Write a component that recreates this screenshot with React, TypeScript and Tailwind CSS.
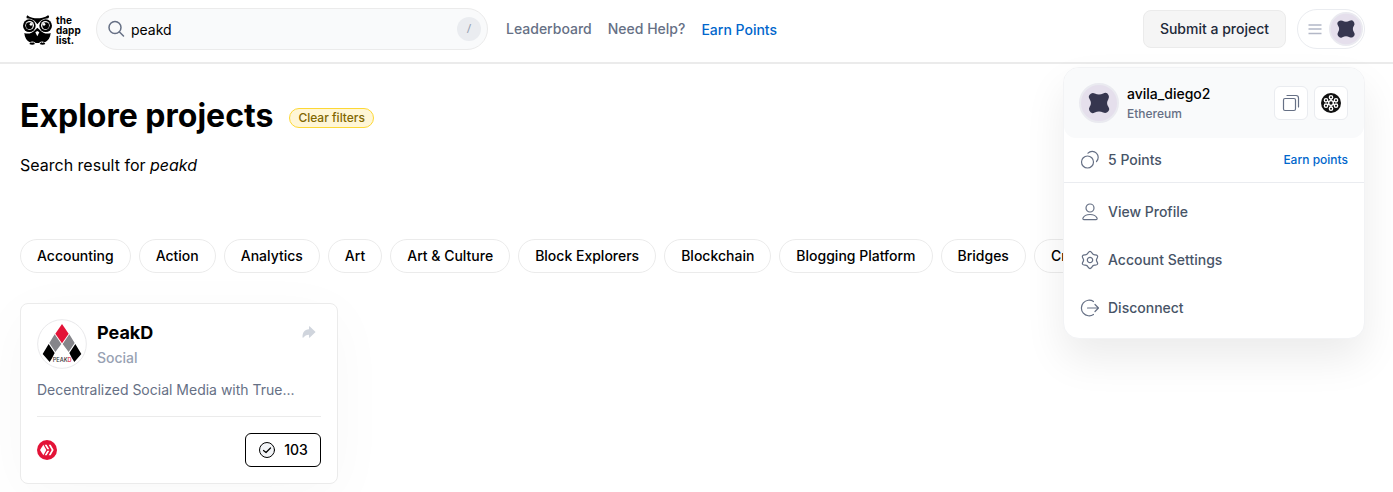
import React from "react";
import { IoArrowRedo } from "react-icons/io5";

const categories = [
  "Accounting",
  "Action",
  "Analytics",
  "Art",
  "Art & Culture",
  "Block Explorers",
  "Blockchain",
  "Blogging Platform",
  "Bridges",
  "Crowdfunding",
];

const OwlLogo = () => (
  <svg viewBox="0 0 87 90" className="h-[30px] w-[29px]" aria-hidden="true">
    <path d="M13 1 Q18 6 28 8 Q43 11 58 8 Q69 6 75 1 Q81 4 76 10 Q60 11 52 18 L43 28 L35 18 Q27 11 11 10 Q9 5 13 1 Z" />
    <circle cx="19" cy="32" r="19" />
    <circle cx="68" cy="32" r="19" />
    <path d="M4 54 Q22 60 37 44 L43 38 L50 44 Q65 60 83 54 Q82 76 62 84 L24 84 Q5 76 4 54 Z" />
    <circle cx="20" cy="31" r="13" fill="#fff" />
    <circle cx="67" cy="31" r="13" fill="#fff" />
    <circle cx="19" cy="32" r="10" />
    <circle cx="68" cy="32" r="10" />
    <circle cx="24" cy="28" r="4" fill="#fff" />
    <circle cx="63" cy="28" r="4" fill="#fff" />
    <path d="M37 52 L43 48 L49 52 L43 64 Z" fill="#fff" />
    <path d="M16 85 Q26 75 38 84 L34 87 L18 87 Z M48 84 Q58 75 70 85 L68 87 L52 87 Z" fill="#fff" />
    <path d="M19 87 q4 -8 8 -3 q4 -5 9 3 q-8 4 -17 0 Z M50 87 q5 -8 9 -3 q4 -5 8 3 q-8 4 -17 0 Z" />
  </svg>
);

const Avatar = ({ className }: { className: string }) => (
  <svg viewBox="-20 -20 40 40" className={className} aria-hidden="true">
    <circle r="19" fill="#e5dfec" stroke="#eaeaf0" strokeWidth="2" />
    <path
      d="M-6 -6 Q0 -3 6 -6 Q2 0 6 6 Q0 3 -6 6 Q-2 0 -6 -6 Z"
      fill="#36364f"
      stroke="#36364f"
      strokeWidth="8"
      strokeLinejoin="round"
    />
  </svg>
);

const PeakDLogo = () => (
  <svg viewBox="0 0 150 150" className="size-[50px] shrink-0" role="img" aria-label="PeakD">
    <circle cx="75" cy="75" r="73" fill="#fff" stroke="#e9e9eb" strokeWidth="3" />
    <path d="M75 15 L95 44 L75 73 L55 44 Z" fill="#e31337" />
    <path d="M53 46 L73 75 L55 99 L37 72 Z M97 46 L113 72 L95 99 L77 75 Z" fill="#85858a" />
    <path d="M35 75 L53 102 L45 118 L38 129 L17 105 Z M115 75 L133 105 L112 129 L105 118 L97 102 Z" />
    <text x="47" y="128" fontSize="17" fontWeight="500" fontFamily="Inter, sans-serif" fill="#333">
      PEAK<tspan fill="#e31337">D</tspan>
    </text>
  </svg>
);

const HiveIcon = () => (
  <svg viewBox="0 0 60 60" className="size-5" role="img" aria-label="Hive">
    <circle cx="30" cy="30" r="30" fill="#e31337" />
    <path d="M19 14 L28 30 L19 46 L9 30 Z" fill="#fff" />
    <path d="M23 14 h6 l8 14 h-6 Z M31 32 h6 l-8 14 h-6 Z M35 14 h6 l9 16 l-9 16 h-6 l9 -16 Z" fill="#fff" />
  </svg>
);

const TokenIcon = () => (
  <svg viewBox="-30 -30 60 60" className="size-5" aria-hidden="true">
    <circle r="30" fill="#111" />
    <g fill="none" stroke="#fff" strokeWidth="4">
      <path d="M0 -13 V13 M-11 -6 L11 6 M11 -6 L-11 6" />
      <circle r="7" fill="#111" />
      <circle cy="-17" r="5" />
      <circle cy="17" r="5" />
      <circle cx="-15" cy="-8" r="5" />
      <circle cx="15" cy="-8" r="5" />
      <circle cx="-15" cy="8" r="5" />
      <circle cx="15" cy="8" r="5" />
    </g>
  </svg>
);

const Icon = ({ children, viewBox = "0 0 20 20" }: { children: React.ReactNode; viewBox?: string }) => (
  <svg
    viewBox={viewBox}
    className="size-5 shrink-0 text-[#667085]"
    fill="none"
    stroke="currentColor"
    strokeLinecap="round"
    strokeLinejoin="round"
    aria-hidden="true"
  >
    {children}
  </svg>
);

const menuItems = [
  {
    label: "View Profile",
    icon: (
      <Icon>
        <circle cx="10" cy="6" r="4" strokeWidth="1.2" />
        <path d="M10 12.5c-3.6 0-6 1.4-7 3.6-.4.9.1 1.6 1 1.6h12c.9 0 1.4-.7 1-1.6-1-2.2-3.4-3.6-7-3.6Z" strokeWidth="1.2" />
      </Icon>
    ),
  },
  {
    label: "Account Settings",
    icon: (
      <Icon viewBox="-12 -12 24 24">
        <circle r="3.2" strokeWidth="1.5" />
        <path
          d="M-2.2 -8.6Q0 -12 2.2 -8.6Q3.4 -5.9 6.3 -6.2Q10.4 -6 8.6 -2.4Q6.8 0 8.6 2.4Q10.4 6 6.3 6.2Q3.4 5.9 2.2 8.6Q0 12 -2.2 8.6Q-3.4 5.9 -6.3 6.2Q-10.4 6 -8.6 2.4Q-6.8 0 -8.6 -2.4Q-10.4 -6 -6.3 -6.2Q-3.4 -5.9 -2.2 -8.6Z"
          strokeWidth="1.5"
        />
      </Icon>
    ),
  },
  {
    label: "Disconnect",
    icon: (
      <Icon>
        <path d="M13.5 3.5A7.8 7.8 0 1 0 13.5 16.5M7.5 10H18.5M15 6.5L18.5 10L15 13.5" strokeWidth="1.2" />
      </Icon>
    ),
  },
];

const Header = () => (
  <header className="flex h-16 items-center border-b-2 border-[#ebebeb] bg-white pr-7 pl-[23px]">
    <a href="#" className="mb-0.5 flex items-center text-black">
      <OwlLogo />
      <span className="ml-1 w-7 text-[10px] leading-[10px] font-bold">
        <span className="block">the</span>
        <span className="block">dapp</span>
        <span className="block">list.</span>
      </span>
    </a>
    <form
      className="mb-1 ml-3 flex h-[42px] w-[392px] items-center rounded-full border border-[#ebebeb] bg-[#f9fafb] pr-1.5 pl-[9px]"
      role="search"
    >
      <label htmlFor="search" className="sr-only">
        Search
      </label>
      <Icon>
        <circle cx="9" cy="8.5" r="6" strokeWidth="1.5" />
        <path d="M13.5 13L17.5 17" strokeWidth="1.5" />
      </Icon>
      <input
        id="search"
        type="text"
        defaultValue="peakd"
        className="h-full min-w-0 flex-1 bg-transparent pl-[5px] text-sm text-black outline-none"
      />
      <kbd className="flex size-6 items-center justify-center rounded-full bg-[#eaecf0] font-sans text-xs text-[#98a2b3]">
        /
      </kbd>
    </form>
    <nav className="mb-1 ml-[18px] flex items-center gap-4 text-sm font-medium text-[#667085]">
      <a href="#">Leaderboard</a>
      <a href="#">Need Help?</a>
      <a href="#" className="pt-0.5 text-[#0066cc]">
        Earn Points
      </a>
    </nav>
    <div className="mb-1 ml-auto flex items-center gap-[11px]">
      <button className="h-[38px] rounded-lg border border-[#ebebeb] bg-[#f5f5f5] px-4 text-sm font-medium text-[#1d2939]">
        Submit a project
      </button>
      <button
        aria-label="Account menu"
        className="flex h-10 w-[68px] items-center justify-between rounded-full border border-[#eaecf0] pr-px pl-2.5"
      >
        <svg viewBox="0 0 14 12" className="h-3 w-3.5" stroke="#b3b8c7" strokeWidth="1.5" aria-hidden="true">
          <path d="M0.5 2H13.5M0.5 6H13.5M0.5 10.5H13.5" />
        </svg>
        <Avatar className="size-[34px]" />
      </button>
    </div>
  </header>
);

const AccountMenu = () => (
  <div className="absolute top-[67px] right-7 w-[302px] overflow-hidden rounded-2xl border border-[#f2f3f5] bg-white shadow-[0_20px_40px_rgba(0,0,0,0.08)]">
    <div className="flex h-[70px] items-center rounded-b-xl bg-[#f9fafb] pr-4 pl-[15px]">
      <Avatar className="size-10" />
      <div className="ml-2 flex-1 pt-0.5">
        <p className="text-sm leading-5 font-medium text-black">avila_diego2</p>
        <p className="text-xs leading-5 font-medium text-[#667085]">Ethereum</p>
      </div>
      <div className="flex gap-1.5">
        <button
          aria-label="Copy address"
          className="flex size-[34px] items-center justify-center rounded-md border border-[#eaecf0] bg-white"
        >
          <Icon>
            <rect x="2.5" y="5.5" width="12" height="12" rx="1.5" strokeWidth="1.2" />
            <path d="M6 2.5H15A2.5 2.5 0 0 1 17.5 5V14" strokeWidth="1.2" />
          </Icon>
        </button>
        <button
          aria-label="View token"
          className="flex size-[34px] items-center justify-center rounded-md border border-[#eaecf0] bg-white"
        >
          <TokenIcon />
        </button>
      </div>
    </div>
    <div className="flex h-[45px] items-center border-b border-[#eaecf0] px-4 text-sm font-medium text-[#475467]">
      <Icon>
        <circle cx="7.5" cy="12" r="6" strokeWidth="1.2" />
        <path d="M8 3.2A5.8 5.8 0 1 1 16.5 11.5" strokeWidth="1.2" />
      </Icon>
      <span className="ml-2">5 Points</span>
      <a href="#" className="ml-auto text-xs text-[#0066cc]">
        Earn points
      </a>
    </div>
    <ul className="pt-[5px] pb-1.5">
      {menuItems.map((item) => (
        <li key={item.label}>
          <button className="flex h-12 w-full items-center gap-2 px-4 text-sm font-medium text-[#475467]">
            {item.icon}
            {item.label}
          </button>
        </li>
      ))}
    </ul>
  </div>
);

const ProjectCard = () => (
  <article className="w-[318px] rounded-lg border border-[#ebebeb] bg-white px-4 pt-[15px] pb-4 shadow-[0_12px_60px_rgba(0,0,0,0.03)]">
    <div className="flex">
      <PeakDLogo />
      <div className="ml-2.5 flex-1">
        <h2 className="text-lg leading-7 font-bold text-black">PeakD</h2>
        <p className="text-sm leading-[22px] font-medium text-[#98a2b3]">Social</p>
      </div>
      <button aria-label="Share" className="mt-[5px] mr-1 self-start text-[#d0d5dd]">
        <IoArrowRedo className="size-4" />
      </button>
    </div>
    <p className="mt-[11px] truncate text-sm text-[#667085]">Decentralized Social Media with True...</p>
    <div className="mt-4 flex items-center justify-between border-t border-[#ebebeb] pt-4">
      <HiveIcon />
      <button className="flex h-[34px] w-[76px] items-center justify-center gap-2 rounded-md border border-black text-sm font-medium text-black">
        <svg
          viewBox="0 0 18 18"
          className="size-[18px]"
          fill="none"
          stroke="currentColor"
          strokeLinecap="round"
          strokeLinejoin="round"
          aria-hidden="true"
        >
          <circle cx="9" cy="9" r="7.5" fill="#f2f4f7" />
          <path d="M5.5 9.5L8 11.5L12.5 7" strokeWidth="1.2" />
        </svg>
        103
      </button>
    </div>
  </article>
);

const App = () => {
  return (
    <div className="relative overflow-x-hidden bg-white font-[Inter,sans-serif]">
      <Header />
      <main className="px-5 pt-8 pb-2">
        <div className="flex items-center gap-4">
          <h1 className="text-[32px] leading-10 font-bold text-black">Explore projects</h1>
          <button className="mt-1 h-5 rounded-full border border-[#fdd835] bg-[#fff6d6] px-2 text-xs font-medium text-[#806600]">
            Clear filters
          </button>
        </div>
        <p className="mt-[17px] text-base text-black">
          Search result for <em>peakd</em>
        </p>
        <div className="mt-[62px] flex gap-2 overflow-hidden">
          {categories.map((category) => (
            <button
              key={category}
              className="h-[34px] shrink-0 rounded-full border border-[#ebebeb] bg-white px-4 text-sm font-medium text-black"
            >
              {category}
            </button>
          ))}
        </div>
        <div className="mt-[30px]">
          <ProjectCard />
        </div>
      </main>
      <AccountMenu />
    </div>
  );
};

export default App;
